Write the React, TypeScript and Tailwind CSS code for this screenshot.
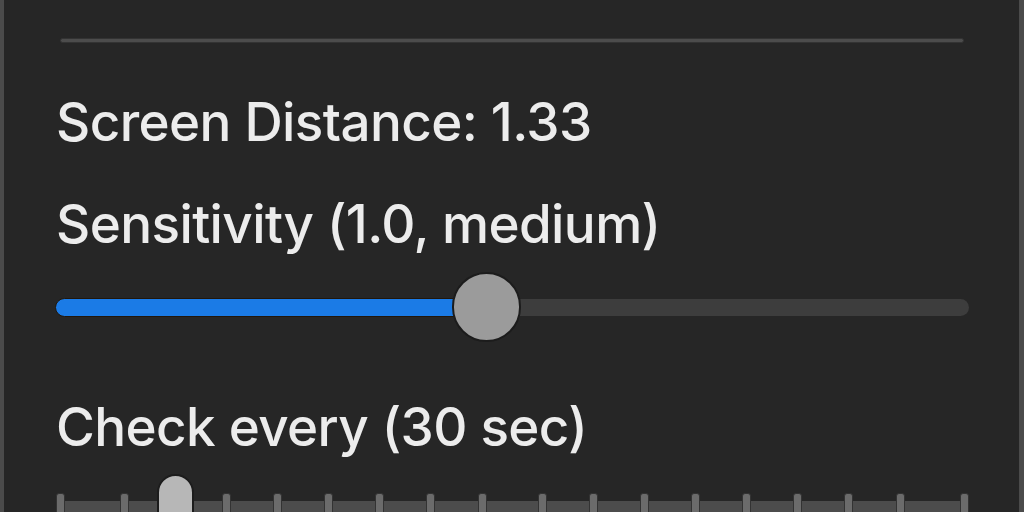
const ticks = [60, 124, 175, 226, 277, 328, 379, 430, 482, 542, 593, 644, 695, 746, 797, 848, 900, 964]

function Label({ children }: { children: string }) {
  return (
    <p className="h-[64px] text-[53px] font-medium leading-[64px] tracking-[-0.6px] text-[#ececec] whitespace-nowrap">
      {children}
    </p>
  )
}

export default function App() {
  return (
    <div
      className="flex h-[512px] w-full overflow-hidden border-l-[4px] border-r-[5px] border-[#4b4b4b] bg-[#262626]"
      style={{ fontFamily: 'Inter, "Liberation Sans", Arial, sans-serif' }}
    >
      <div className="flex w-full flex-col pl-[52px] pr-[51px]">
        <div className="mx-[4px] mt-[38px] h-[5px] shrink-0 rounded-sm border border-[#333] bg-[#4c4c4c]" />

        <div className="mt-[47px]">
          <Label>Screen Distance: 1.33</Label>
        </div>
        <div className="mt-[38px]">
          <Label>Sensitivity (1.0, medium)</Label>
        </div>

        <div className="relative -mx-px mt-[16px] flex h-[70px] shrink-0 items-center">
          <div className="flex h-[19px] w-full">
            <div className="h-full w-[431px] rounded-l-full border border-[#21170c] bg-[#1b7be6]" />
            <div className="my-px h-[17px] flex-1 rounded-r-full bg-[#3d3d3d]" />
          </div>
          <div className="absolute left-[397px] top-0 h-[70px] w-[69px] rounded-full border-2 border-[#1c1c1c] bg-[#9b9b9b]" />
        </div>

        <div className="mt-[53px]">
          <Label>Check every (30 sec)</Label>
        </div>

        <div className="relative mt-[15px] h-[40px] shrink-0">
          <div className="absolute left-0 right-0 top-[27px] h-[14px] bg-[#4c4c4c]" />
          {ticks.map((x) => (
            <div
              key={x}
              className="absolute top-[19px] h-[24px] w-[9px] rounded-t-[3px] border border-[#333] bg-[#6b6b6b]"
              style={{ left: x - 60 }}
            />
          ))}
          <div className="absolute left-[101px] top-0 h-[44px] w-[37px] rounded-t-full border-2 border-[#1c1c1c] bg-[#b7b7b7]" />
        </div>
      </div>
    </div>
  )
}
